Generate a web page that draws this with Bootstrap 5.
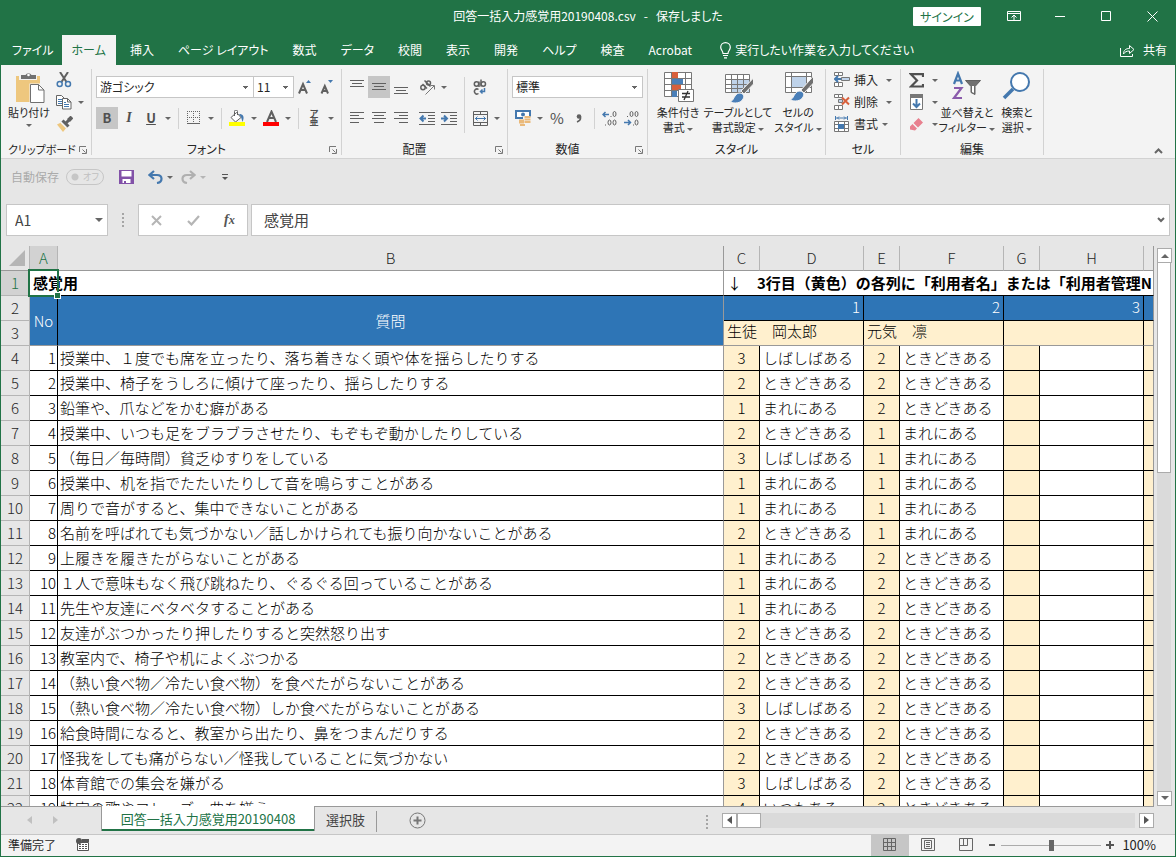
<!DOCTYPE html>
<html lang="ja">
<head>
<meta charset="utf-8">
<meta name="viewport" content="width=device-width, initial-scale=1">
<title>回答一括入力感覚用20190408.csv</title>
<link href="https://cdn.jsdelivr.net/npm/bootstrap@5.3.0/dist/css/bootstrap.min.css" rel="stylesheet">
<style>
:root{--green:#217346;--chrome:#e6e6e6;--ribbon:#f3f3f3;--line:#d2d2d2;--blue:#2e75b6;--cream:#fff0ce;--ink:#262626}
body{font-family:"Noto Sans CJK JP","Noto Sans",sans-serif;font-size:12px;line-height:16px;color:var(--ink);font-feature-settings:"palt";background:var(--chrome)}
button,input,select{font:inherit;color:inherit;font-feature-settings:inherit}
button{padding:0;border:0;background:none}
svg{display:block;fill:none;flex:none}
.win{height:100vh;border:1px solid var(--green);border-top:0}
.top-area{background:var(--green);color:#fff}
.titlebar{height:35px}
.sign{width:68px;height:19px;background:#fff;color:var(--green);border-radius:1px;line-height:19px;margin:7px 10px 0 0}
.winbtn{width:46px;height:32px}
.tabs{height:30px}
.tabs a{color:#fff;padding:0 12px;line-height:30px;white-space:nowrap;text-decoration:none}
.tabs a.on{background:var(--ribbon);color:var(--green);padding:0 10px;margin-right:2px}
.tabs a.file{padding:0 8px 0 11px}
.ribbon{background:var(--ribbon);height:94px;border-bottom:1px solid var(--line)}
.rgroup{border-right:1px solid var(--line);margin:4px 0;height:86px;padding-left:4px}
.g-clip{width:91px}.g-font{width:250px}.g-align{width:166px}.g-num{width:140px}.g-style{width:178px}.g-cell{width:75px}.g-edit{width:143px}
.rbody{height:73px}
.two{padding-top:7px;gap:9px}
.ib{width:22px;height:22px}
.cb{width:12px;height:22px}
.ib,.cb,.rowbtn{display:flex;align-items:center;justify-content:center;flex:none}
.ib.on{background:#c6c6c6}
.vs{width:1px;height:21px;background:var(--line);margin:0 4px;flex:none}
.vs.tall{height:56px}
.caret{display:inline-block;border:3px solid transparent;border-top-color:#666;border-bottom:0;vertical-align:middle;flex:none}
.caret.pale{border-top-color:#b5b5b5}
.big{display:flex;flex-direction:column;align-items:center;font-size:11px;line-height:15px;white-space:nowrap;padding-top:2px}
.big svg{margin-bottom:1px}
.w42{width:48px}.w52{width:52px}.w66{width:68px}
.rowbtn{height:22px;gap:4px}
.col-small{width:36px}
.rlabel{height:14px;line-height:14px}
.launch{position:absolute;right:4px;bottom:0}
.g-clip .rlabel{font-size:11px;padding-left:3px}
select.box{border:1px solid #c6c6c6;background-color:#fff;border-radius:0;height:22px;padding:0 3px;line-height:20px;min-width:0;appearance:none;background-image:linear-gradient(#666,#666),linear-gradient(#666,#666),linear-gradient(#666,#666);background-size:5px 1px,3px 1px,1px 1px;background-repeat:no-repeat;background-position:right 5px top 9px,right 6px top 10px,right 7px top 11px}
.fname{width:158px}.fsize{width:41px;margin-left:-1px}.nfmt{width:131px}
.qat{height:37px;padding-left:10px;color:#ababab}
.undo{margin-left:14px}
.tog{width:38px;height:16px;margin:0 15px 0 7px;position:relative}
.tog input{appearance:none;display:block;width:38px;height:16px;border:1px solid #c6c6c6;border-radius:8px;background:radial-gradient(circle at 8px 7px,#c6c6c6 3px,transparent 4px)}
.tog span{position:absolute;left:17px;top:0;font-size:9px;color:#c0c0c0}
.fbar{padding:9px 5px 10px;font-size:14px}
.fbox{background:#fff;border:1px solid #c6c6c6;height:32px;border-radius:0}
.nbox{width:102px;margin-right:14px}.fxbox{width:110px;margin:0 3px 0 14px}
.fbox input{border:0;background:none;outline:0;min-width:0;color:#444}
.dots{width:2px;height:14px;border-left:2px dotted #a5a5a5}
.sheetarea{min-height:0;overflow:hidden}
.gridwrap{overflow:hidden;border-bottom:1px solid #999;min-width:0}
.sheet{width:100%;table-layout:fixed;border-collapse:separate;border-spacing:0;font-size:15px;line-height:24px;font-feature-settings:normal;color:#000;background:#fff}
.sheet th,.sheet td{height:25px;padding:0;border:0 solid #000;border-width:0 1px 1px 0;white-space:nowrap;font-weight:300}
.sheet th{background:var(--chrome);color:#262626;text-align:center;border-color:#b5b5b5}
.sheet thead th{border-bottom-color:#999}
.sheet th.sel{background:#d2d2d2;color:var(--green)}
.sheet .frz{border-right-color:#999}
.sheet .hz td{border-bottom-color:#999}
.sheet .hz2{border-bottom-color:#999}
.sheet .no{text-align:right;padding-right:1px}
.sheet .q{padding-left:2px}
.sheet .v{background:var(--cream);text-align:center}
.sheet .t{padding-left:3px}
.sheet .bl{background:var(--blue);color:#fff;text-align:center}
.sheet .bl.pn{text-align:right;padding-right:3px;line-height:21px;vertical-align:top}
.sheet .nm{background:var(--cream);padding-left:3px;line-height:20px;vertical-align:top}
.sheet tr>:last-child{border-right-color:#999}
.sheet .a1{position:relative;z-index:1;padding-left:3px;border-right-color:transparent;font-weight:700}
.sheet .memo{font-weight:700;overflow:hidden}
.selbox{position:absolute;left:-2px;top:-2px;width:31px;height:28px;border:2px solid var(--green)}
.handle{position:absolute;right:-4px;bottom:-4px;width:7px;height:7px;background:var(--green);border:1px solid #fff}
.vscroll{width:21px;padding:2px 4px 1px 3px}
.track{background:#dadada}
.thumb{background:#fff;border:1px solid #ababab}
.sb{width:15px;height:15px;background:#fff;border:1px solid #ababab;display:flex;align-items:center;justify-content:center;flex:none}
.vth{height:40%;margin-top:-1px}
.tabbar{height:28px;font-size:13px}
.navs{width:100px;gap:21px;padding-left:26px}
.stab{width:214px;background:#fff;color:var(--green);border:solid #999;border-width:0 1px 0 1px;height:25px;line-height:23px;margin-top:-1px;box-shadow:inset 0 -2px var(--green)}
.stab2{color:#444;padding:0 11px;line-height:26px}
.hsc{width:432px;padding-top:6px;margin:0 21px 0 14px}
.hth{width:24px;height:15px}
.status{height:22px;background:var(--ribbon);border-top:1px solid #c6c6c6;padding-left:7px;padding-right:19px}
.vb{width:38px;height:21px;display:flex;align-items:center;justify-content:center}
.vb.on{background:#c6c6c6}
.rec{margin-left:20px}
.zoom{appearance:none;width:100px;height:12px;background:linear-gradient(#ababab,#ababab) center/100% 1px no-repeat;margin:0 5px}
.zoom::-webkit-slider-thumb{appearance:none;width:5px;height:11px;background:#666}
</style>
</head>
<body>
<div class="win d-flex flex-column">
<header class="top-area">
  <div class="titlebar d-flex position-relative justify-content-end">
    <div class="position-absolute start-0 end-0 text-center pt-2 pe-none" style="white-space:pre">回答一括入力感覚用20190408.csv   -   保存しました</div>
    <button class="sign">サインイン</button>
    <button class="winbtn d-flex align-items-center justify-content-center" aria-label="リボンの表示"><svg width="14" height="12" viewBox="0 0 14 12" stroke="#fff"><path d="M.5 1.5h13v9H.5zM.5 3.500h13M7 10V5.500M4.500 7.500L7 5l2.500 2.500"/></svg></button>
    <button class="winbtn d-flex align-items-center justify-content-center" aria-label="最小化"><svg width="10" height="10" stroke="#fff"><path d="M0 5.500h10"/></svg></button>
    <button class="winbtn d-flex align-items-center justify-content-center" aria-label="最大化"><svg width="10" height="10" stroke="#fff"><path d="M.5.5h9v9h-9z"/></svg></button>
    <button class="winbtn d-flex align-items-center justify-content-center" aria-label="閉じる"><svg width="11" height="11" stroke="#fff"><path d="M.5.5l10 10M10.500.5l-10 10"/></svg></button>
  </div>
  <nav class="tabs d-flex">
    <a class="file" href="#">ファイル</a><a class="on" href="#">ホーム</a><a href="#">挿入</a><a href="#">ページ レイアウト</a><a href="#">数式</a><a href="#">データ</a><a href="#">校閲</a><a href="#">表示</a><a href="#">開発</a><a href="#">ヘルプ</a><a href="#">検査</a><a href="#">Acrobat</a>
    <a class="d-flex align-items-center gap-1 ms-1" href="#"><svg width="11" height="17" viewBox="0 0 11 17" stroke="#fff" stroke-width="1.200"><path d="M3 11.500C3 9 .7 8 .7 5.300a4.800 4.600 0 0 1 9.600 0C10.300 8 8 9 8 11.500zM3 13.500h5M4 15.800h3"/></svg>実行したい作業を入力してください</a>
    <a class="d-flex align-items-center gap-2 ms-auto pe-2" href="#"><svg width="15" height="13" viewBox="0 0 15 13" stroke="#fff"><path d="M.5 4v8.500h12V10M3.500 10c0-4 2.500-5.500 6-5.500V1.500l4.500 4-4.500 4V7c-3 0-4.500.8-6 3z"/></svg>共有</a>
  </nav>
</header>

<section class="ribbon d-flex position-relative">
  <div class="rgroup g-clip position-relative">
    <div class="rbody d-flex">
      <button class="big w42"><svg width="32" height="33" viewBox="0 0 32 33"><path fill="#eec77e" d="M3 5h24v26H3z"/><path fill="#f3f3f3" d="M6 3h18v6H6z"/><path fill="#707070" d="M8 8V4h4.500a3.500 3.500 0 0 1 6 0H23v4z"/><circle cx="15.500" cy="4" r="1.300" fill="#fff"/><path fill="#fff" stroke="#f3f3f3" stroke-width="3" d="M18 14h9l5 5v14H18z"/><path fill="#fff" stroke="#707070" d="M17.500 13.500h8l5.500 5.500v12.500H17.500zM25.500 13.500V19H31"/></svg>貼り付け<i class="caret mt-1"></i></button>
      <div class="d-flex flex-column col-small">
        <button class="ib" aria-label="切り取り"><svg width="16" height="16" viewBox="0 0 16 16"><path stroke="#606060" stroke-width="2" d="M4 0l6.500 10M12 0L5.500 10"/><circle cx="3.700" cy="12" r="2.500" stroke="#4478ae" stroke-width="1.500"/><circle cx="12" cy="12" r="2.500" stroke="#4478ae" stroke-width="1.500"/></svg></button>
        <div class="d-flex"><button class="ib" aria-label="コピー"><svg width="16" height="15" viewBox="0 0 16 15"><path fill="#fff" stroke="#666" d="M.5.5h5l3 3v7h-8z"/><path stroke="#4478ae" d="M2 4.500h4M2 6.500h4M2 8.500h4"/><path fill="#fff" stroke="#666" d="M6.500 3.500h5l3.500 3.500v7H6.500zM11.500 3.500V7H15"/><path stroke="#4478ae" d="M8 7.500h2M8 9.500h5M8 11.500h5"/></svg></button><button class="cb" aria-label="コピー オプション"><i class="caret"></i></button></div>
        <button class="ib" aria-label="書式のコピー"><svg width="17" height="16" viewBox="0 0 17 16"><path fill="#eec77e" d="M1 8.500l5-2.500 5 5-4 5z"/><path stroke="#f3f3f3" stroke-width="5" d="M6 5l5.500 5.500"/><path stroke="#606060" stroke-width="3" d="M6.500 4.500l6 6"/><path stroke="#606060" stroke-width="3" d="M10 7l3-3"/><path stroke="#606060" stroke-width="4" d="M12.500 4.500L16 1"/></svg></button>
      </div>
    </div>
    <div class="rlabel">クリップボード</div>
    <button class="launch" aria-label="設定"><svg width="8" height="10" viewBox="0 0 8 10" stroke="#777"><path d="M.5 7V1.500H7M3.500 4.500l3 3M7.500 4v4.500H3"/></svg></button>
  </div>

  <div class="rgroup g-font position-relative">
    <div class="rbody two d-flex flex-column">
      <div class="d-flex"><select class="box fname" aria-label="フォント"><option>游ゴシック</option></select><select class="box fsize" aria-label="サイズ"><option>11</option></select>
        <button class="ib" aria-label="拡大"><svg width="14" height="14" viewBox="0 0 14 14"><path stroke="#606060" stroke-width="2" d="M1 13.500L5 4l4 9.500M2.500 10h5"/><path fill="#4478ae" d="M8 3h5L10.500 0z"/></svg></button>
        <button class="ib" aria-label="縮小"><svg width="14" height="14" viewBox="0 0 14 14"><path stroke="#606060" stroke-width="2" d="M1.500 13.500L4.800 6 8 13.500M3 11h4"/><path fill="#4478ae" d="M8 0h5l-2.500 3z"/></svg></button></div>
      <div class="d-flex align-items-center">
        <button class="ib on fw-bold" style="font-size:13px;color:#505050">B</button><button class="ib" style="font:italic 700 14px 'Liberation Serif',serif;color:#505050">I</button><button class="ib fw-bold text-decoration-underline" style="font-size:13px;color:#505050">U</button><button class="cb" aria-label="下線"><i class="caret"></i></button><i class="vs"></i>
        <button class="ib" aria-label="罫線"><svg width="14" height="14" viewBox="0 0 14 14" stroke="#666"><path stroke-dasharray="1 1" d="M0 .5h14M0 6.500h14M.5 0v13M6.500 0v13M12.500 0v13"/><path d="M0 12.500h13"/></svg></button><button class="cb" aria-label="罫線の種類"><i class="caret"></i></button><i class="vs"></i>
        <button class="ib" aria-label="塗りつぶし"><svg width="16" height="16" viewBox="0 0 16 16"><path fill="#fff" stroke="#606060" d="M2 7.500l5.500-5 4.500 5-5.500 4.500zM5.500 6V1.500a1.500 1.500 0 0 1 3 0V5"/><path fill="#4478ae" d="M10 4c4 0 6 2.500 3.500 8L12 7z"/><path fill="#ff0" d="M0 12h16v4H0z"/></svg></button><button class="cb" aria-label="塗りつぶしの色"><i class="caret"></i></button>
        <button class="ib" aria-label="文字色"><svg width="16" height="16" viewBox="0 0 16 16"><path stroke="#606060" stroke-width="2" d="M4 12L8.500 1.500 13 12M5.500 8h6"/><path fill="red" d="M0 12h16v4H0z"/></svg></button><button class="cb" aria-label="文字の色"><i class="caret"></i></button><i class="vs"></i>
        <button class="ib flex-column fw-bold" style="font-size:9px;line-height:8px;color:#505050"><span>ア</span><span>亜</span></button><button class="cb" aria-label="ふりがな"><i class="caret"></i></button>
      </div>
    </div>
    <div class="rlabel text-center pe-4">フォント</div>
    <button class="launch" aria-label="設定"><svg width="8" height="10" viewBox="0 0 8 10" stroke="#777"><path d="M.5 7V1.500H7M3.500 4.500l3 3M7.500 4v4.500H3"/></svg></button>
  </div>

  <div class="rgroup g-align position-relative">
    <div class="rbody d-flex">
      <div class="two d-flex flex-column">
        <div class="d-flex"><button class="ib" aria-label="上揃え"><svg width="14" height="14" stroke="#606060"><path d="M0 .5h14M2 3.500h10M0 6.500h14"/></svg></button><button class="ib on" aria-label="上下中央"><svg width="14" height="14" stroke="#606060"><path d="M0 3.500h14M2 6.500h10M0 9.500h14"/></svg></button><button class="ib" aria-label="下揃え"><svg width="14" height="14" stroke="#606060"><path d="M0 7.500h14M2 10.500h10M0 13.500h14"/></svg></button>
          <button class="ib ms-1" aria-label="方向"><svg width="17" height="15" viewBox="0 0 17 15"><g stroke="#606060" stroke-width="1.500"><circle cx="4" cy="7.500" r="2.200"/><path d="M3.500 4l4.500 4.500"/><path d="M5.500.5l6 6"/><circle cx="9.500" cy="3" r="2"/></g><path stroke="#777" d="M6.500 14.500L15 6M11.500 5.500h4v4"/></svg></button><button class="cb" aria-label="方向の種類"><i class="caret"></i></button></div>
        <div class="d-flex"><button class="ib" aria-label="左揃え"><svg width="14" height="12" stroke="#606060"><path d="M0 .5h14M0 3.500h9M0 6.500h14M0 10.500h9"/></svg></button><button class="ib" aria-label="中央揃え"><svg width="14" height="12" stroke="#606060"><path d="M0 .5h14M2 3.500h10M0 6.500h14M2 10.500h10"/></svg></button><button class="ib" aria-label="右揃え"><svg width="14" height="12" stroke="#606060"><path d="M0 .5h14M5 3.500h9M0 6.500h14M5 10.500h9"/></svg></button>
          <button class="ib ms-1" aria-label="インデント減"><svg width="16" height="13" stroke="#606060"><path d="M0 .5h16M9 3.500h7M9 6.500h7M9 9.500h7M0 12.500h16"/><path stroke="#4478ae" stroke-width="2" d="M2 6.500h5M4.500 3.500l-3 3 3 3"/></svg></button><button class="ib" aria-label="インデント増"><svg width="16" height="13" stroke="#606060"><path d="M0 .5h16M9 3.500h7M9 6.500h7M9 9.500h7M0 12.500h16"/><path stroke="#4478ae" stroke-width="2" d="M0 6.500h5M3 3.500l3 3-3 3"/></svg></button></div>
      </div>
      <i class="vs tall mt-2 ms-1 me-1"></i>
      <div class="two d-flex flex-column">
        <button class="ib" aria-label="折り返し"><svg width="14" height="16" viewBox="0 0 14 16" stroke="#606060" stroke-width="1.500"><circle cx="3.500" cy="5" r="2.200"/><path d="M6 2.500V8M8 .5V7.500"/><circle cx="10.300" cy="5" r="2.200"/><path d="M5.500 10.500a2.500 2.500 0 1 0 0 4"/><path stroke="#4478ae" d="M11.500 9v3.500H8M9.500 10.500l-2 2 2 2"/></svg></button>
        <div class="d-flex"><button class="ib" aria-label="セルの結合"><svg width="15" height="15" stroke="#606060"><path d="M.5.500h14v14H.5zM0 3.500h15M0 11.500h15M7.500 0v3.500M7.500 11.500V15"/><path stroke="#4478ae" d="M2 7.500h11M4.500 5.500l-2 2 2 2M10.500 5.500l2 2-2 2"/></svg></button><button class="cb" aria-label="結合の種類"><i class="caret"></i></button></div>
      </div>
    </div>
    <div class="rlabel text-center pe-4">配置</div>
    <button class="launch" aria-label="設定"><svg width="8" height="10" viewBox="0 0 8 10" stroke="#777"><path d="M.5 7V1.500H7M3.500 4.500l3 3M7.500 4v4.500H3"/></svg></button>
  </div>

  <div class="rgroup g-num position-relative">
    <div class="rbody two d-flex flex-column">
      <select class="box nfmt" aria-label="表示形式"><option>標準</option></select>
      <div class="d-flex align-items-center">
        <button class="ib" aria-label="通貨"><svg width="16" height="16" viewBox="0 0 16 16"><path fill="#fff" stroke="#4478ae" stroke-width="2" d="M1 1h14v7H1z"/><circle cx="8" cy="4.500" r="2" fill="#4478ae"/><path stroke="#f3f3f3" stroke-width="7" d="M8 10h8"/><path stroke="#eab97a" stroke-width="2" d="M9.500 7h6M9.500 9.500h6M9.500 12h6M4 10.500h5M4 12.500h5M5 15h5"/></svg></button><button class="cb" aria-label="通貨の種類"><i class="caret"></i></button>
        <button class="ib" style="font-size:15px;color:#505050">%</button><button class="ib" aria-label="桁区切り"><svg width="6" height="9" viewBox="0 0 6 9"><circle cx="3" cy="2.500" r="2.300" fill="#606060"/><path stroke="#606060" stroke-width="1.500" d="M4.500 3C5 5.500 3.500 7 1 8"/></svg></button><i class="vs"></i>
        <button class="ib" aria-label="小数点表示桁数を増やす"><svg width="16" height="15" viewBox="0 0 16 15"><path stroke="#4478ae" stroke-width="1.500" d="M1 3.500h6M3.500 1L1 3.500 3.500 6"/><g stroke="#606060"><ellipse cx="12.500" cy="3" rx="1.500" ry="2.500"/><ellipse cx="7.500" cy="11.500" rx="1.500" ry="2.500"/><ellipse cx="12.500" cy="11.500" rx="1.500" ry="2.500"/><path d="M8.500 5.500h1M3 14h1"/></g></svg></button>
        <button class="ib" aria-label="小数点表示桁数を減らす"><svg width="16" height="15" viewBox="0 0 16 15"><path stroke="#4478ae" stroke-width="1.500" d="M0 11.500h6M4 9l2.500 2.500L4 14"/><g stroke="#606060"><ellipse cx="7.500" cy="3" rx="1.500" ry="2.500"/><ellipse cx="12.500" cy="3" rx="1.500" ry="2.500"/><ellipse cx="12.500" cy="11.500" rx="1.500" ry="2.500"/><path d="M3 5.500h1M9 14h1"/></g></svg></button>
      </div>
    </div>
    <div class="rlabel text-center pe-4">数値</div>
    <button class="launch" aria-label="設定"><svg width="8" height="10" viewBox="0 0 8 10" stroke="#777"><path d="M.5 7V1.500H7M3.500 4.500l3 3M7.500 4v4.500H3"/></svg></button>
  </div>

  <div class="rgroup g-style ps-0">
    <div class="rbody d-flex ps-1">
      <button class="big w52"><svg width="32" height="33" viewBox="0 0 32 33"><path fill="#fff" stroke="#777" d="M2.500 1.500h27v24h-27zM2.500 7.500h27M2.500 13.500h27M2.500 19.500h27M9.500 1.500v24M23.500 1.500v24"/><path fill="#d8603c" d="M10 1h6v6h-6zM10 14h9v5h-9z"/><path fill="#4a7fb8" d="M10 8h11v5H10zM10 20h5v6h-5z"/><path fill="#fff" stroke="#777" d="M16.500 18.500h15v12h-15z"/><path stroke="#333" stroke-width="1.300" d="M20 22.500h8M20 26h8M26 20l-4 9"/></svg><span>条件付き</span><span>書式 <i class="caret"></i></span></button>
      <button class="big w66"><svg width="32" height="33" viewBox="0 0 32 33"><path fill="#fff" d="M3 3h24v18H3z"/><path fill="#bfd3ea" d="M9 9h18v12H9z"/><path stroke="#777" d="M3.500 3.500h24v18h-24zM3 8.500h25M3 13.500h25M3 17.500h25M9.500 3v18M15.500 3v18M21.500 3v18"/><path fill="#707070" stroke="#f3f3f3" d="M31.500 7v6L22 23l-3-3z"/><path fill="#4a7fb8" stroke="#f3f3f3" d="M8 31c4-1 4-8 9-9 4 0 6 3 4 6-2 4-8 5-13 3z"/></svg><span>テーブルとして</span><span>書式設定 <i class="caret"></i></span></button>
      <button class="big w52"><svg width="32" height="33" viewBox="0 0 32 33"><path fill="#fff" stroke="#777" d="M3.500 1.500h26v20h-26zM3 5.500h26M3 16.500h26M9.500 1v21M24.500 1v21"/><path fill="#bfd3ea" d="M10 6h14v10H10z"/><path fill="#707070" stroke="#f3f3f3" d="M31.500 5v7L22 22l-3-3z"/><path fill="#4a7fb8" stroke="#f3f3f3" d="M8 29c4-1 4-8 9-9 4 0 6 3 4 6-2 4-8 5-13 3z"/></svg><span>セルの</span><span>スタイル <i class="caret"></i></span></button>
    </div>
    <div class="rlabel text-center">スタイル</div>
  </div>

  <div class="rgroup g-cell ps-0">
    <div class="rbody ps-2">
      <button class="rowbtn"><svg width="16" height="16" viewBox="0 0 16 16" stroke="#777"><path fill="#fff" d="M.5.5h4v3h-4zM4.500.5h4v3h-4zM.5 10.500h4v4h-4zM4.500 10.500h4v4h-4z"/><path fill="#bfd3ea" d="M7.500 5.500h8v3h-8z"/><path stroke="#4478ae" stroke-width="2" d="M1 7h6M4 4L1 7l3 3"/></svg>挿入<i class="caret ms-1"></i></button>
      <button class="rowbtn"><svg width="16" height="16" viewBox="0 0 16 16" stroke="#777"><path fill="#fff" d="M.5.500h4v3h-4zM4.500.5h4v3h-4zM.5 11.500h4v4h-4zM4.500 11.500h4v4h-4z"/><path fill="#bfd3ea" d="M4.500 5.500h4v3h-4z"/><path stroke="#d8603c" stroke-width="2" d="M8 3.500l7 7M15 3.500l-7 7"/></svg>削除<i class="caret ms-1"></i></button>
      <button class="rowbtn"><svg width="16" height="16" viewBox="0 0 16 16"><path stroke="#4478ae" d="M1.500 0v4M13.500 0v4M2 2h11M5 .5L3.500 2 5 3.500M10 .5L11.500 2 10 3.500"/><path fill="#fff" stroke="#777" d="M.5 5.500h14v10H.5zM.5 8.500h14M.5 12.500h14M4.500 5v11M10.500 5v11"/><path fill="#4478ae" d="M4 8h6v5H4z"/></svg>書式<i class="caret"></i></button>
    </div>
    <div class="rlabel text-center">セル</div>
  </div>

  <div class="rgroup g-edit ps-0">
    <div class="rbody d-flex ps-1">
      <div class="col-small">
        <button class="rowbtn ps-1 gap-2" aria-label="合計"><svg width="15" height="15" viewBox="0 0 15 15"><path stroke="#505050" stroke-width="2.200" d="M14 4V1.200H2L8 7.500 2 13.500h12V11"/></svg><i class="caret"></i></button>
        <button class="rowbtn ps-1 gap-2" aria-label="フィル"><svg width="15" height="16" viewBox="0 0 15 16"><path fill="#fff" stroke="#777" d="M1.500.5h12v15h-12z"/><path fill="#777" d="M1 0h13v4H1z"/><path stroke="#4478ae" stroke-width="2" d="M7.500 5v8M4 9.500L7.500 13 11 9.500"/></svg><i class="caret"></i></button>
        <button class="rowbtn ps-1 gap-2" aria-label="クリア"><svg width="15" height="13" viewBox="0 0 15 13"><path fill="#e8808f" d="M9.500 0L14 4.500 9 9.500 4.500 5zM3.500 6L8 10.500 6 12.500 1 11.500 1 8.500z"/></svg><i class="caret"></i></button>
      </div>
      <button class="big w52"><svg width="32" height="33" viewBox="0 0 32 33"><path stroke="#4478ae" stroke-width="2.200" d="M3 13L7 2.500 11 13M4.500 9.500h5"/><path stroke="#8a5bab" stroke-width="2.200" d="M3 17h7.500L3 27h8"/><path fill="#707070" stroke="#606060" d="M14.500 9.500h15l-5.500 6v8l-4-2v-6z"/><path fill="#fff" d="M21 15h2v7l-2-1z"/></svg><span>並べ替えと</span><span>フィルター <i class="caret"></i></span></button>
      <button class="big w42"><svg width="32" height="33" viewBox="0 0 32 33"><circle cx="19" cy="11" r="9" fill="#fff" stroke="#4478ae" stroke-width="2"/><path stroke="#4478ae" stroke-width="3.500" d="M12 18L3 27"/></svg><span>検索と</span><span>選択 <i class="caret"></i></span></button>
    </div>
    <div class="rlabel text-center">編集</div>
  </div>
  <button class="ms-auto align-self-end p-1 me-2" aria-label="リボンを折りたたむ"><svg width="9" height="6" viewBox="0 0 9 6"><path stroke="#666" stroke-width="2" d="M1 5l3.500-3.500L8 5"/></svg></button>
</section>

<div class="qat d-flex align-items-center">
  <label for="autosave">自動保存</label>
  <div class="tog"><input id="autosave" type="checkbox" role="switch"><span>オフ</span></div>
  <button aria-label="上書き保存"><svg width="15" height="14" viewBox="0 0 15 14"><path fill="#8252a8" d="M0 0h15v14H0z"/><path fill="#fff" d="M2.500 1h10v5.500h-10zM3.500 9h8v4h-8z"/><path fill="#8252a8" d="M5 11h2v3H5z"/></svg></button>
  <button class="undo me-1 d-flex align-items-center gap-1" aria-label="元に戻す"><svg width="15" height="14" viewBox="0 0 15 14" stroke="#4478ae" stroke-width="2.200"><path d="M6 1L1.500 5 6 9M2 5h7c6 0 6 7 0 8"/></svg><i class="caret"></i></button>
  <button class="ms-1 d-flex align-items-center gap-1" aria-label="やり直し"><svg width="15" height="14" viewBox="0 0 15 14" stroke="#b0b0b0" stroke-width="2.200"><path d="M9 1l4.500 4L9 9M13 5H6C0 5 0 12 6 13"/></svg><i class="caret pale"></i></button>
  <button class="ms-3" aria-label="カスタマイズ"><svg width="7" height="7"><path stroke="#555" d="M0 .5h6"/><path fill="#555" d="M0 3h6L3 6z"/></svg></button>
</div>

<div class="fbar d-flex align-items-center">
  <div class="fbox nbox d-flex align-items-center pe-1"><input class="flex-fill ps-2 w-50" aria-label="名前ボックス" value="A1"><i class="caret" style="border-width:4px 4px 0"></i></div>
  <i class="dots"></i>
  <div class="fbox fxbox d-flex align-items-center justify-content-around">
    <button aria-label="キャンセル"><svg width="11" height="11" stroke="#b5b5b5" stroke-width="2"><path d="M1 1l9 9M10 1l-9 9"/></svg></button>
    <button aria-label="入力"><svg width="13" height="11" stroke="#b5b5b5" stroke-width="2.200"><path d="M1 6l3.500 3.500L12 1"/></svg></button>
    <button style="font:italic 700 14px 'Liberation Serif',serif;color:#555" aria-label="関数の挿入">f<small>x</small></button>
  </div>
  <div class="fbox flex-fill d-flex align-items-center ps-1"><input class="flex-fill ps-2" style="font-size:15px" aria-label="数式バー" value="感覚用"><svg class="me-1" width="8" height="6" viewBox="0 0 8 6"><path stroke="#666" stroke-width="2" d="M1 1l3 3 3-3"/></svg></div>
</div>

<main class="sheetarea flex-fill d-flex">
  <div class="gridwrap flex-fill">
    <table class="sheet">
      <colgroup><col style="width:29px"><col style="width:28px"><col><col style="width:36px"><col style="width:104px"><col style="width:36px"><col style="width:104px"><col style="width:36px"><col style="width:104px"><col style="width:10px"></colgroup>
      <thead><tr><th><svg class="ms-auto me-1" width="16" height="16"><path fill="#b5b5b5" d="M16 0v16H0z"/></svg></th><th class="sel">A</th><th class="frz">B</th><th>C</th><th>D</th><th>E</th><th>F</th><th>G</th><th>H</th><th></th></tr></thead>
      <tbody id="rows">
        <tr><th class="sel">1</th><td class="a1">感覚用<span class="selbox"><i class="handle"></i></span></td><td class="frz"></td><td class="t memo" colspan="7"><span class="fw-normal">↓</span>　3行目（黄色）の各列に「利用者名」または「利用者管理N</td></tr>
        <tr><th>2</th><td class="bl hz2" rowspan="2">No</td><td class="bl frz hz2" rowspan="2">質問</td><td class="bl pn" colspan="2">1</td><td class="bl pn" colspan="2">2</td><td class="bl pn" colspan="2">3</td><td class="bl"></td></tr>
        <tr class="hz"><th>3</th><td class="nm" colspan="2">生徒　岡太郎</td><td class="nm" colspan="2">元気　凛</td><td class="nm" colspan="2"></td><td class="v"></td></tr>
      </tbody>
    </table>
  </div>
  <div class="vscroll d-flex flex-column">
    <button class="sb" aria-label="上へ"><i class="caret" style="border-width:0 4px 4px;border-bottom-color:#666;border-bottom-style:solid"></i></button>
    <div class="track flex-fill"><div class="thumb vth"></div></div>
    <button class="sb" aria-label="下へ"><i class="caret" style="border-width:4px 4px 0"></i></button>
  </div>
</main>

<div class="tabbar d-flex">
  <div class="navs d-flex align-items-center"><button aria-label="前"><svg width="5" height="8"><path fill="#c0c0c0" d="M5 0v8L0 4z"/></svg></button><button aria-label="次"><svg width="5" height="8"><path fill="#c0c0c0" d="M0 0v8l5-4z"/></svg></button></div>
  <button class="stab">回答一括入力感覚用20190408</button>
  <button class="stab2">選択肢</button><i class="vs mt-1 mx-0" style="background:#999"></i>
  <button class="ms-4 ps-2" aria-label="新しいシート"><svg width="17" height="17" stroke="#777"><circle cx="8.500" cy="8.500" r="7.500"/><path stroke-width="2" d="M4.500 8.500h8M8.500 4.500v8"/></svg></button>
  <i class="dots ms-auto mt-2"></i>
  <div class="hsc d-flex"><button class="sb" aria-label="左へ"><svg width="5" height="8"><path fill="#555" d="M5 0v8L0 4z"/></svg></button><div class="track flex-fill me-1" style="height:15px"><div class="thumb hth"></div></div><button class="sb" aria-label="右へ"><svg width="5" height="8"><path fill="#555" d="M0 0v8l5-4z"/></svg></button></div>
</div>

<footer class="status d-flex align-items-center">
  <span>準備完了</span>
  <button class="me-auto rec" aria-label="マクロの記録"><svg width="14" height="14" viewBox="0 0 14 14"><path fill="#fff" stroke="#555" d="M1.500 4.500h11v8h-11z"/><path fill="#555" d="M6 1h7v3H6z"/><path stroke="#555" stroke-dasharray="2 1" d="M3 6.500h9M3 8.500h9M3 10.500h9"/><circle cx="3" cy="3" r="3" fill="#555"/></svg></button>
  <button class="vb on" aria-label="標準"><svg width="14" height="14" stroke="#666"><path d="M.5.5h12v12H.5zM.5 4.500h12M.5 8.500h12M4.500.5v12M8.500.5v12"/></svg></button>
  <button class="vb" aria-label="ページ レイアウト"><svg width="14" height="14" stroke="#666"><path d="M.5.5h13v12H.5zM3.500 2.500h7v8h-7zM5 4.500h4M5 6.500h4M5 8.500h4"/></svg></button>
  <button class="vb" aria-label="改ページ プレビュー"><svg width="14" height="14" stroke="#666"><path d="M.5.5h13v12H.5zM4.500.5v7M8.500.5v7M.5 7.500h8"/></svg></button>
  <button class="ms-1" aria-label="縮小"><svg width="7" height="8"><path stroke="#555" stroke-width="2" d="M0 4h6"/></svg></button>
  <input class="zoom" type="range" min="0" max="100" value="50" aria-label="ズーム">
  <button aria-label="拡大"><svg width="8" height="8"><path stroke="#555" stroke-width="2" d="M0 4h8M4 0v8"/></svg></button>
  <span class="ms-2" style="font-size:13px">100%</span>
</footer>
</div>
<script>
const word={1:'まれにある',2:'ときどきある',3:'しばしばある',4:'いつもある'};
const data=[['授業中、１度でも席を立ったり、落ち着きなく頭や体を揺らしたりする',3,2],['授業中、椅子をうしろに傾けて座ったり、揺らしたりする',2,2],['鉛筆や、爪などをかむ癖がある',1,2],['授業中、いつも足をブラブラさせたり、もぞもぞ動かしたりしている',2,1],['（毎日／毎時間）貧乏ゆすりをしている',3,1],['授業中、机を指でたたいたりして音を鳴らすことがある',1,1],['周りで音がすると、集中できないことがある',1,1],['名前を呼ばれても気づかない／話しかけられても振り向かないことがある',2,1],['上履きを履きたがらないことがある',1,2],['１人で意味もなく飛び跳ねたり、ぐるぐる回っていることがある',1,2],['先生や友達にベタベタすることがある',1,2],['友達がぶつかったり押したりすると突然怒り出す',2,2],['教室内で、椅子や机によくぶつかる',2,2],['（熱い食べ物／冷たい食べ物）を食べたがらないことがある',2,2],['（熱い食べ物／冷たい食べ物）しか食べたがらないことがある',3,2],['給食時間になると、教室から出たり、鼻をつまんだりする',2,2],['怪我をしても痛がらない／怪我していることに気づかない',2,2],['体育館での集会を嫌がる',3,2],['特定の歌やフレーズ、曲を嫌う',4,2]];
document.getElementById('rows').insertAdjacentHTML('beforeend',data.map(([q,a,b],i)=>`<tr><th>${i+4}</th><td class="no">${i+1}</td><td class="q frz">${q}</td><td class="v">${a}</td><td class="t">${word[a]}</td><td class="v">${b}</td><td class="t">${word[b]}</td><td class="v"></td><td></td><td class="v"></td></tr>`).join(''));
</script>
<script src="https://cdn.jsdelivr.net/npm/bootstrap@5.3.0/dist/js/bootstrap.bundle.min.js"></script>
</body>
</html>
